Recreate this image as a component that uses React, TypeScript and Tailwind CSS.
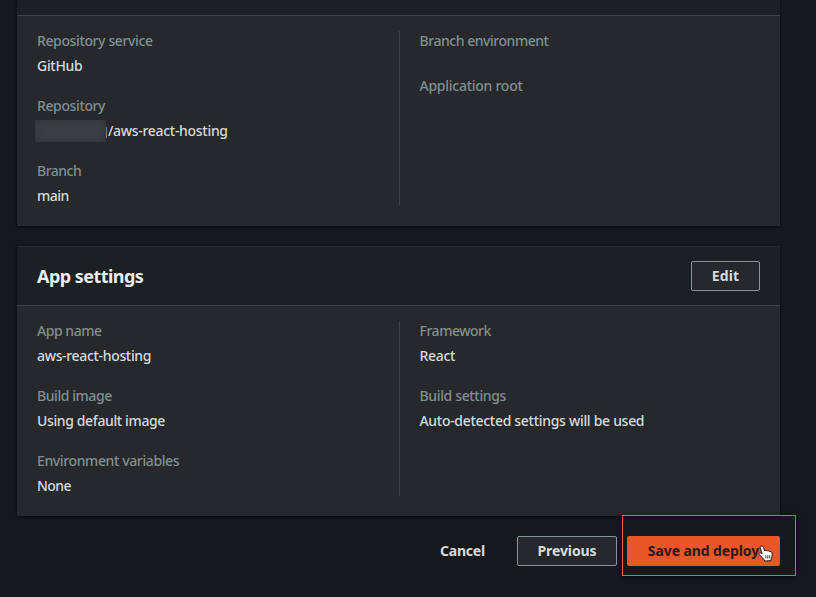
import type { ReactNode } from "react";

type Item = { label: string; labelClass: string; value?: ReactNode; valueClass?: string };

function Field({ label, labelClass, value, valueClass = "" }: Item) {
  return (
    <div className="text-sm leading-5 font-medium whitespace-nowrap">
      <div className={`mb-[5px] text-[#819090] ${labelClass}`}>{label}</div>
      {value && <div className={`flex h-5 text-[#d5dbdb] ${valueClass}`}>{value}</div>}
    </div>
  );
}

function Columns({ left, right }: { left: Item[]; right: Item[] }) {
  return (
    <div className="flex bg-[#26282c] px-5 pt-[15px] pb-5">
      <div className="flex h-[175px] w-[362px] flex-col gap-5">
        {left.map((item) => (
          <Field key={item.label} {...item} />
        ))}
      </div>
      <div className="flex flex-1 flex-col gap-5 border-l border-[#3d4247] pl-[19.5px]">
        {right.map((item) => (
          <Field key={item.label} {...item} />
        ))}
      </div>
    </div>
  );
}

function HandCursor() {
  return (
    <svg className="absolute top-[9px] left-[131px]" width="16" height="18" viewBox="0 0 16 18">
      <path
        d="M3 1.2C4.3.5 5.2 1.4 5.6 2.7L6.7 6C7.2 5 8.6 5.1 9 6.1C9.7 5.2 11 5.5 11.3 6.6C12.3 6 13.8 6.7 14 7.9C14.5 10.3 14.1 11.7 13.2 13.3L13 15.7L6.6 16L6.1 14.4L3.3 11.8L1 9.2C.4 8.2 1.6 7.3 2.6 7.9L4.1 9L2.3 3.1C2 2.2 2.2 1.5 3 1.2Z"
        fill="white"
        stroke="#171313"
        strokeWidth="1"
        strokeLinejoin="round"
      />
      <path d="M7.7 10.2L8.1 13.6M9.8 10.2V13.5M11.8 10L11.5 13.4" stroke="#171313" strokeWidth=".8" />
    </svg>
  );
}

export default function App() {
  return (
    <div className="h-[597px] w-[816px] overflow-hidden bg-[#16181c] pl-[17px] font-['Noto_Sans',sans-serif]">
      <section className="w-[763px] shadow-[0_1px_2px_#08090b]">
        <div className="h-4 border-b border-[#3d4247] bg-[#1c2023]" />
        <Columns
          left={[
            {
              label: "Repository service",
              labelClass: "tracking-[-0.38px]",
              value: "GitHub",
              valueClass: "tracking-[-0.3px]",
            },
            {
              label: "Repository",
              labelClass: "tracking-[-0.38px]",
              value: (
                <>
                  <span className="-mt-px -ml-0.5 h-[22px] w-[71px] bg-[#3b3f42] shadow-[inset_0_0_8px_#303437]" />
                  <span className="mt-1.5 h-[11px] w-px bg-[#777b7d]" />
                  <span className="ml-px">/aws-react-hosting</span>
                </>
              ),
              valueClass: "tracking-[-0.3px]",
            },
            { label: "Branch", labelClass: "tracking-[-0.5px]", value: "main", valueClass: "tracking-[-0.5px]" },
          ]}
          right={[
            { label: "Branch environment", labelClass: "tracking-[-0.46px]" },
            { label: "Application root", labelClass: "tracking-[-0.26px]" },
          ]}
        />
      </section>

      <section className="mt-5 w-[763px] shadow-[0_1px_2px_#08090b]">
        <header className="flex h-[60px] items-center justify-between border-t border-b border-t-[#25292c] border-b-[#3d4247] bg-[#1c2023] px-5">
          <h2 className="text-lg font-bold tracking-[-0.54px] text-[#eaeded]">App settings</h2>
          <button className="h-[30px] w-[69px] rounded-[2px] border border-[#879596] bg-[#26282c] text-sm leading-5 font-bold tracking-[0.1px] text-[#d5dbdb]">
            Edit
          </button>
        </header>
        <Columns
          left={[
            {
              label: "App name",
              labelClass: "tracking-[-0.45px]",
              value: "aws-react-hosting",
              valueClass: "tracking-[-0.33px]",
            },
            {
              label: "Build image",
              labelClass: "tracking-[-0.44px]",
              value: "Using default image",
              valueClass: "tracking-[-0.37px]",
            },
            {
              label: "Environment variables",
              labelClass: "tracking-[-0.38px]",
              value: "None",
              valueClass: "tracking-[-0.6px]",
            },
          ]}
          right={[
            {
              label: "Framework",
              labelClass: "tracking-[-0.47px]",
              value: "React",
              valueClass: "tracking-[-0.3px]",
            },
            {
              label: "Build settings",
              labelClass: "tracking-[-0.35px]",
              value: "Auto-detected settings will be used",
              valueClass: "tracking-[-0.3px]",
            },
          ]}
        />
      </section>

      <footer className="mt-5 flex w-[763px] justify-end text-sm leading-5 font-bold whitespace-nowrap text-[#d5dbdb]">
        <button className="mr-[32px] h-[30px] tracking-[-0.2px]">Cancel</button>
        <button className="mr-2.5 h-[30px] w-[100px] rounded-[2px] border border-[#879596] bg-[#26282c] tracking-[-0.1px]">
          Previous
        </button>
        <div className="relative">
          <button className="h-[30px] w-[153px] rounded-[2px] bg-[#e9562a] tracking-[-0.1px] text-[#2a1a17]">
            Save and deploy
          </button>
          <div className="absolute -top-[21px] -left-[5px] h-[61px] w-[174px] border border-[#f95c4c] shadow-[0_1px_4px_#08090b]" />
          <HandCursor />
        </div>
      </footer>
    </div>
  );
}
